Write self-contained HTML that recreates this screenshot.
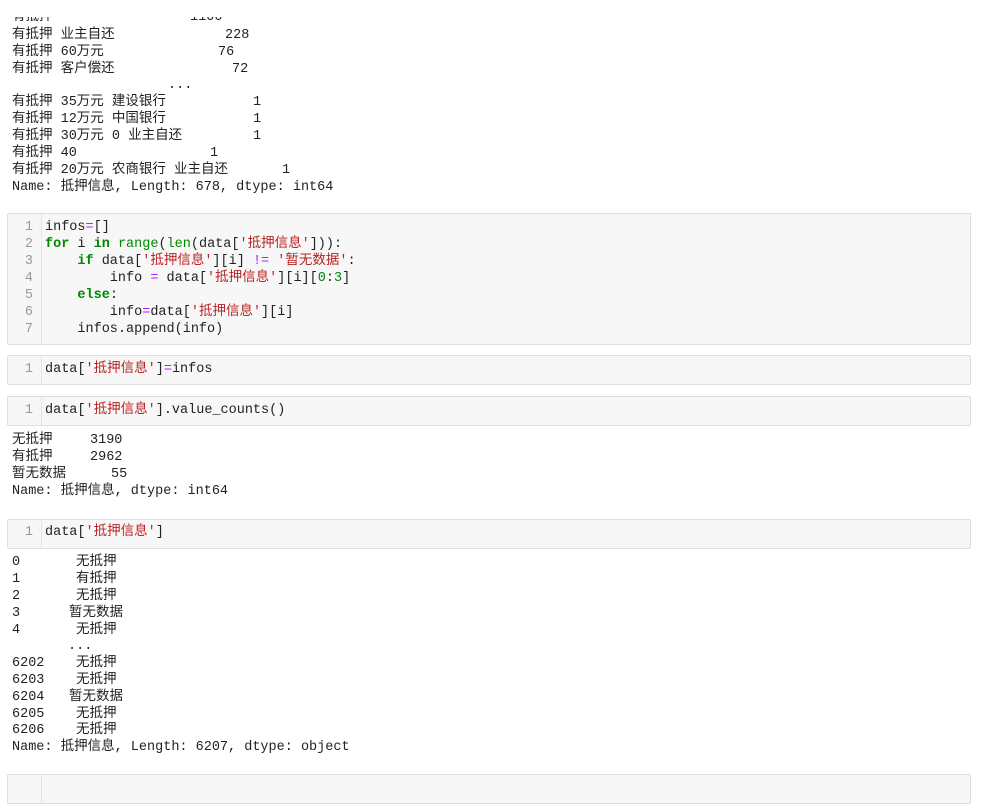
<!DOCTYPE html>
<html><head><meta charset="utf-8"><style>
body{margin:0;width:982px;height:781px;background:#fff;position:relative;overflow:hidden;font-family:"Liberation Mono","Noto Sans CJK SC",monospace;font-size:13.5px;color:#222}
.l{position:absolute;white-space:pre;line-height:17px;height:17px}
.cell{position:absolute;left:7px;width:962px;background:#f7f7f7;border:1px solid #dedede;border-radius:2px}
.g{position:absolute;left:0;top:0;bottom:0;width:33px;border-right:1px solid #e4e4e4}
.n{color:#999;text-align:right;width:26px}
.k{color:#080;font-weight:bold}
.s{color:#b22}
.o{color:#a2f}
.b{color:#080}
.m{color:#080}
</style></head><body>
<div class="l" style="left:12px;top:9px;clip-path:inset(8px 0 0 0)">有抵押</div>
<div class="l" style="left:190px;top:9px;clip-path:inset(8px 0 0 0)">1106</div>
<div class="l" style="left:12px;top:27px">有抵押 业主自还</div><div class="l" style="left:225px;top:27px">228</div>
<div class="l" style="left:12px;top:44px">有抵押 60万元</div><div class="l" style="left:218px;top:44px">76</div>
<div class="l" style="left:12px;top:61px">有抵押 客户偿还</div><div class="l" style="left:232px;top:61px">72</div>
<div class="l" style="left:168px;top:77px">...</div>
<div class="l" style="left:12px;top:94px">有抵押 35万元 建设银行</div><div class="l" style="left:253px;top:94px">1</div>
<div class="l" style="left:12px;top:111px">有抵押 12万元 中国银行</div><div class="l" style="left:253px;top:111px">1</div>
<div class="l" style="left:12px;top:128px">有抵押 30万元 0 业主自还</div><div class="l" style="left:253px;top:128px">1</div>
<div class="l" style="left:12px;top:145px">有抵押 40</div><div class="l" style="left:210px;top:145px">1</div>
<div class="l" style="left:12px;top:162px">有抵押 20万元 农商银行 业主自还</div><div class="l" style="left:282px;top:162px">1</div>
<div class="l" style="left:12px;top:179px">Name: 抵押信息, Length: 678, dtype: int64</div>

<div class="cell" style="top:213px;height:130px"><div class="g"></div></div>
<div class="l n" style="left:7px;top:219px">1</div><div class="l" style="left:45px;top:219px">infos<span class="o">=</span>[]</div>
<div class="l n" style="left:7px;top:236px">2</div><div class="l" style="left:45px;top:236px"><span class="k">for</span> i <span class="k">in</span> <span class="m">range</span>(<span class="m">len</span>(data[<span class="s">'抵押信息'</span>])):</div>
<div class="l n" style="left:7px;top:253px">3</div><div class="l" style="left:45px;top:253px">    <span class="k">if</span> data[<span class="s">'抵押信息'</span>][i] <span class="o">!=</span> <span class="s">'暂无数据'</span>:</div>
<div class="l n" style="left:7px;top:270px">4</div><div class="l" style="left:45px;top:270px">        info <span class="o">=</span> data[<span class="s">'抵押信息'</span>][i][<span class="b">0</span>:<span class="b">3</span>]</div>
<div class="l n" style="left:7px;top:287px">5</div><div class="l" style="left:45px;top:287px">    <span class="k">else</span>:</div>
<div class="l n" style="left:7px;top:304px">6</div><div class="l" style="left:45px;top:304px">        info<span class="o">=</span>data[<span class="s">'抵押信息'</span>][i]</div>
<div class="l n" style="left:7px;top:321px">7</div><div class="l" style="left:45px;top:321px">    infos.append(info)</div>

<div class="cell" style="top:355px;height:28px"><div class="g"></div></div>
<div class="l n" style="left:7px;top:361px">1</div><div class="l" style="left:45px;top:361px">data[<span class="s">'抵押信息'</span>]<span class="o">=</span>infos</div>

<div class="cell" style="top:396px;height:28px"><div class="g"></div></div>
<div class="l n" style="left:7px;top:402px">1</div><div class="l" style="left:45px;top:402px">data[<span class="s">'抵押信息'</span>].value_counts()</div>

<div class="l" style="left:12px;top:432px">无抵押</div><div class="l" style="left:90px;top:432px">3190</div>
<div class="l" style="left:12px;top:449px">有抵押</div><div class="l" style="left:90px;top:449px">2962</div>
<div class="l" style="left:12px;top:466px">暂无数据</div><div class="l" style="left:111px;top:466px">55</div>
<div class="l" style="left:12px;top:483px">Name: 抵押信息, dtype: int64</div>

<div class="cell" style="top:519px;height:28px"><div class="g"></div></div>
<div class="l n" style="left:7px;top:524px">1</div><div class="l" style="left:45px;top:524px">data[<span class="s">'抵押信息'</span>]</div>

<div class="l" style="left:12px;top:554px">0</div><div class="l" style="left:76px;top:554px">无抵押</div>
<div class="l" style="left:12px;top:571px">1</div><div class="l" style="left:76px;top:571px">有抵押</div>
<div class="l" style="left:12px;top:588px">2</div><div class="l" style="left:76px;top:588px">无抵押</div>
<div class="l" style="left:12px;top:605px">3</div><div class="l" style="left:69px;top:605px">暂无数据</div>
<div class="l" style="left:12px;top:622px">4</div><div class="l" style="left:76px;top:622px">无抵押</div>
<div class="l" style="left:68px;top:638px">...</div>
<div class="l" style="left:12px;top:655px">6202</div><div class="l" style="left:76px;top:655px">无抵押</div>
<div class="l" style="left:12px;top:672px">6203</div><div class="l" style="left:76px;top:672px">无抵押</div>
<div class="l" style="left:12px;top:689px">6204</div><div class="l" style="left:69px;top:689px">暂无数据</div>
<div class="l" style="left:12px;top:706px">6205</div><div class="l" style="left:76px;top:706px">无抵押</div>
<div class="l" style="left:12px;top:722px">6206</div><div class="l" style="left:76px;top:722px">无抵押</div>
<div class="l" style="left:12px;top:739px">Name: 抵押信息, Length: 6207, dtype: object</div>

<div class="cell" style="top:774px;height:28px"><div class="g"></div></div>
</body></html>
